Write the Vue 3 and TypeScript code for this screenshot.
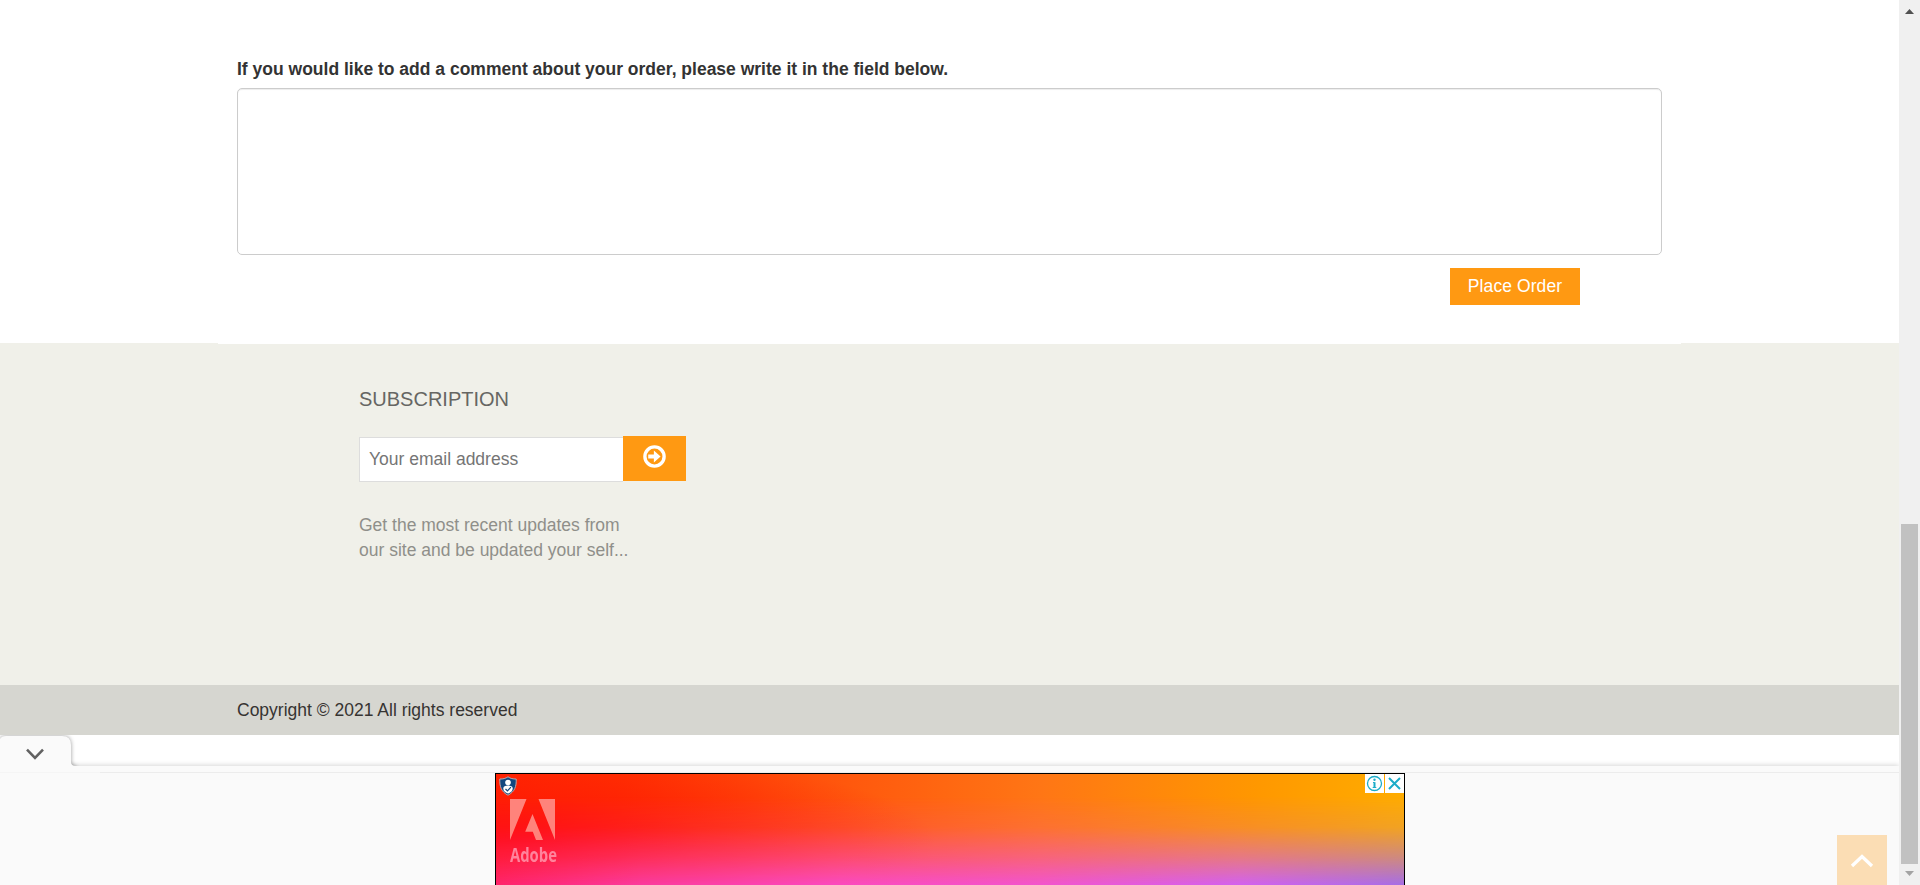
<script setup lang="ts">
import { ref } from 'vue'

const comment = ref('')
const email = ref('')
</script>

<template>
  <div class="window">
    <div class="page">
      <main class="checkout">
        <label class="comment-label" for="comment">If you would like to add a comment about your order, please write it in the field below.</label>
        <textarea id="comment" v-model="comment" class="comment"></textarea>
        <div class="actions"><button class="order">Place Order</button></div>
      </main>
      <footer class="footer">
        <div class="seam"></div>
        <section class="subscription">
          <h2>SUBSCRIPTION</h2>
          <form class="subscribe" @submit.prevent>
            <input v-model="email" type="text" placeholder="Your email address" />
            <button type="submit" aria-label="Subscribe">
              <svg width="23" height="23" viewBox="0 0 22 22">
                <circle cx="11" cy="11" r="9.2" fill="none" stroke="#fff" stroke-width="3.2" />
                <path d="M5 9.200h5.400V5.200L16.800 11l-6.400 5.800v-4H5z" fill="#fff" />
              </svg>
            </button>
          </form>
          <p>Get the most recent updates from<br />our site and be updated your self...</p>
        </section>
      </footer>
      <div class="copyright"><span>Copyright © 2021 All rights reserved</span></div>
      <div class="anchor-head">
        <div class="strip"></div>
        <svg class="tab" width="100" height="38" viewBox="0 0 100 38">
          <path class="tab-shape" d="M0 4Q1.500 1 6 1h56q9 0 9 9v17q0 4 5 4v7H0z" fill="#fafafa" />
          <path d="M0 31h100v7H0z" fill="#fafafa" />
          <path d="M0 37.500h100" stroke="#f5f5f5" />
          <path d="M27 14.700l8 8.200 8-8.200" fill="none" stroke="#616161" stroke-width="2.600" />
        </svg>
      </div>
      <div class="anchor">
        <div class="ad">
          <div class="glow"></div>
          <svg class="shield" width="18" height="20" viewBox="0 0 18 20">
            <path d="M9 .8c2.400 1.700 5 2.300 8.200 2.200.3 7.400-1.400 12.700-8.200 16.200C2.200 15.700.5 10.400.8 3 4 3.100 6.600 2.500 9 .8z" fill="#12487f" stroke="#b9a9ad" stroke-width="1" />
            <circle cx="9" cy="6.500" r="2.800" fill="#fff" />
            <path d="M4.300 12.500c0-2.200 1.900-3 4.700-3s4.700.8 4.700 3c0 2.500-2.200 4.400-4.700 5-2.500-.6-4.700-2.500-4.700-5z" fill="#fff" />
            <path d="M6.500 13l2 1.900 3.400-3.700" fill="none" stroke="#12487f" stroke-width="1.200" />
          </svg>
          <div class="brand">
            <svg width="45" height="41" viewBox="0 0 45 41"><path d="M0 0h16.500L0 41zM28.500 0H45v41zM22.500 15L33 41h-7l-3.200-8.200h-7.600z" fill="#ff837b" /></svg>
            <span class="brand-name">Adobe</span>
          </div>
          <div class="choices">
            <span><svg width="17" height="17" viewBox="0 0 17 17"><circle cx="8.500" cy="8.500" r="7" fill="none" stroke="#1cacc8" stroke-width="1.300" /><path d="M8.500 7.200v5.600" fill="none" stroke="#1cacc8" stroke-width="2" /><path d="M7 7.500h1.500M6.700 12.500h3.600" fill="none" stroke="#1cacc8" stroke-width="1" /><circle cx="8.500" cy="4.700" r="1.200" fill="#1cacc8" /></svg></span>
            <span><svg width="17" height="17" viewBox="0 0 17 17"><path d="M3 3l11 11M14 3L3 14" fill="none" stroke="#1cacc8" stroke-width="2" /></svg></span>
          </div>
        </div>
        <button class="to-top" aria-label="Back to top">
          <svg width="24" height="14" viewBox="0 0 24 14"><path d="M2 12L12 2.500 22 12" fill="none" stroke="#fff" stroke-width="3.300" /></svg>
        </button>
      </div>
    </div>
    <div class="scrollbar">
      <svg width="9" height="5" viewBox="0 0 9 5"><path d="M0 5h9L4.500 0z" fill="#505050" /></svg>
      <div class="thumb"></div>
      <svg width="9" height="5" viewBox="0 0 9 5"><path d="M0 0h9L4.500 5z" fill="#a3a3a3" /></svg>
    </div>
  </div>
</template>

<style>
body {
  margin: 0;
  overflow: hidden;
}
</style>

<style scoped>
* {
  box-sizing: border-box;
}
.window {
  display: flex;
  width: 1920px;
  height: 885px;
  overflow: hidden;
  font: 17.5px/25px "Liberation Sans", Arial, sans-serif;
}
.page {
  display: flex;
  flex-direction: column;
  width: 1899px;
  background: #fff;
}
svg {
  display: block;
}
button {
  border: 0;
  padding: 0;
  font: inherit;
  color: #fff;
  background: #ff9912;
}
.checkout {
  display: flex;
  flex-direction: column;
  height: 343px;
  padding: 57px 237px 0;
}
.comment-label {
  height: 31px;
  font-weight: 700;
  color: #333;
  white-space: nowrap;
}
.comment {
  display: block;
  width: 1425px;
  height: 167px;
  border: 1px solid #ccc;
  border-radius: 5px;
  box-shadow: inset 0 1px 1px rgba(0, 0, 0, 0.075);
  resize: none;
}
.actions {
  display: flex;
  justify-content: flex-end;
  padding: 13px 82px 0 0;
}
.order {
  width: 130px;
  height: 37px;
  letter-spacing: 0.08px;
}
.footer {
  height: 342px;
  background: #f0f0e9;
}
.seam {
  width: 1463px;
  height: 1px;
  margin-left: 218px;
  background: #fff;
}
.subscription {
  padding: 43px 0 0 359px;
}
h2 {
  height: 25px;
  margin: 0;
  font-size: 20px;
  font-weight: 400;
  line-height: 25px;
  color: #666663;
}
.subscribe {
  display: flex;
  height: 46px;
  margin-top: 24px;
}
.subscribe input {
  width: 264px;
  height: 45px;
  margin-top: 1px;
  padding: 0 9px;
  border: 1px solid #ddd;
  border-right: 0;
  border-radius: 0;
  font: inherit;
}
.subscribe input::placeholder {
  color: #757575;
}
.subscribe button {
  width: 63px;
  height: 45px;
  padding: 0 0 5px 20px;
}
.subscription p {
  margin: 31px 0 0;
  color: #8f8f8a;
}
.copyright {
  height: 50px;
  padding: 13px 237px 0;
  background: #d6d6d0;
  color: #363432;
}
.anchor-head {
  position: relative;
  display: flex;
  flex-direction: column;
  justify-content: flex-end;
  height: 38px;
  overflow: hidden;
}
.strip {
  height: 7px;
  background: #fafafa;
  border-bottom: 1px solid #ececec;
  box-shadow: 0 -1px 5px rgba(0, 0, 0, 0.16);
}
.tab {
  position: absolute;
  left: 0;
  top: 0;
}
.tab-shape {
  filter: drop-shadow(0 0 2px rgba(0, 0, 0, 0.4));
}
.anchor {
  display: flex;
  height: 112px;
  background: #fafafa;
}
.ad {
  position: relative;
  width: 910px;
  height: 112px;
  margin-left: 495px;
  border: 1px solid #000;
  border-bottom: 0;
  background:
    radial-gradient(ellipse 420px 90px at 20px 66px, #ff0a04, rgba(255, 20, 8, 0.5) 45%, rgba(255, 30, 8, 0)),
    linear-gradient(to right, #ff2600, #ff3200 14%, #ff540c 36%, #ff7615 60%, #ff9800 84%, #ffac00);
}
.glow {
  position: absolute;
  inset: 0;
  background: linear-gradient(to right, #ff236b, #fb3a9e 16%, #fb4ac0 38%, #f254cf 60%, #d261f0 82%, #a66ee5);
  -webkit-mask-image: linear-gradient(to bottom, transparent 20%, rgba(0, 0, 0, 0.15) 48%, rgba(0, 0, 0, 0.55) 75%, #000);
  mask-image: linear-gradient(to bottom, transparent 20%, rgba(0, 0, 0, 0.15) 48%, rgba(0, 0, 0, 0.55) 75%, #000);
}
.shield {
  position: absolute;
  left: 3px;
  top: 2px;
}
.brand {
  position: absolute;
  left: 14px;
  top: 25px;
}
.brand-name {
  display: block;
  width: 60px;
  height: 26px;
  margin-top: 2px;
  font: 700 19.5px/26px "Open Sans", sans-serif;
  color: #ff839c;
  transform: scaleX(0.76);
  transform-origin: left;
}
.choices {
  position: absolute;
  right: 0;
  top: 0;
  display: flex;
  gap: 1px;
}
.choices span {
  display: flex;
  align-items: center;
  justify-content: center;
  width: 19px;
  height: 19px;
  background: #fff;
}
.to-top {
  display: flex;
  justify-content: center;
  width: 50px;
  height: 50px;
  margin: 62px 0 0 432px;
  padding-top: 19px;
  background: #fbddb4;
}
.scrollbar {
  display: flex;
  flex-direction: column;
  align-items: center;
  width: 21px;
  padding-top: 9px;
  background: #f0f0f0;
}
.thumb {
  width: 17px;
  height: 340px;
  margin: 510px 0 7px;
  background: #c1c1c1;
}
</style>
